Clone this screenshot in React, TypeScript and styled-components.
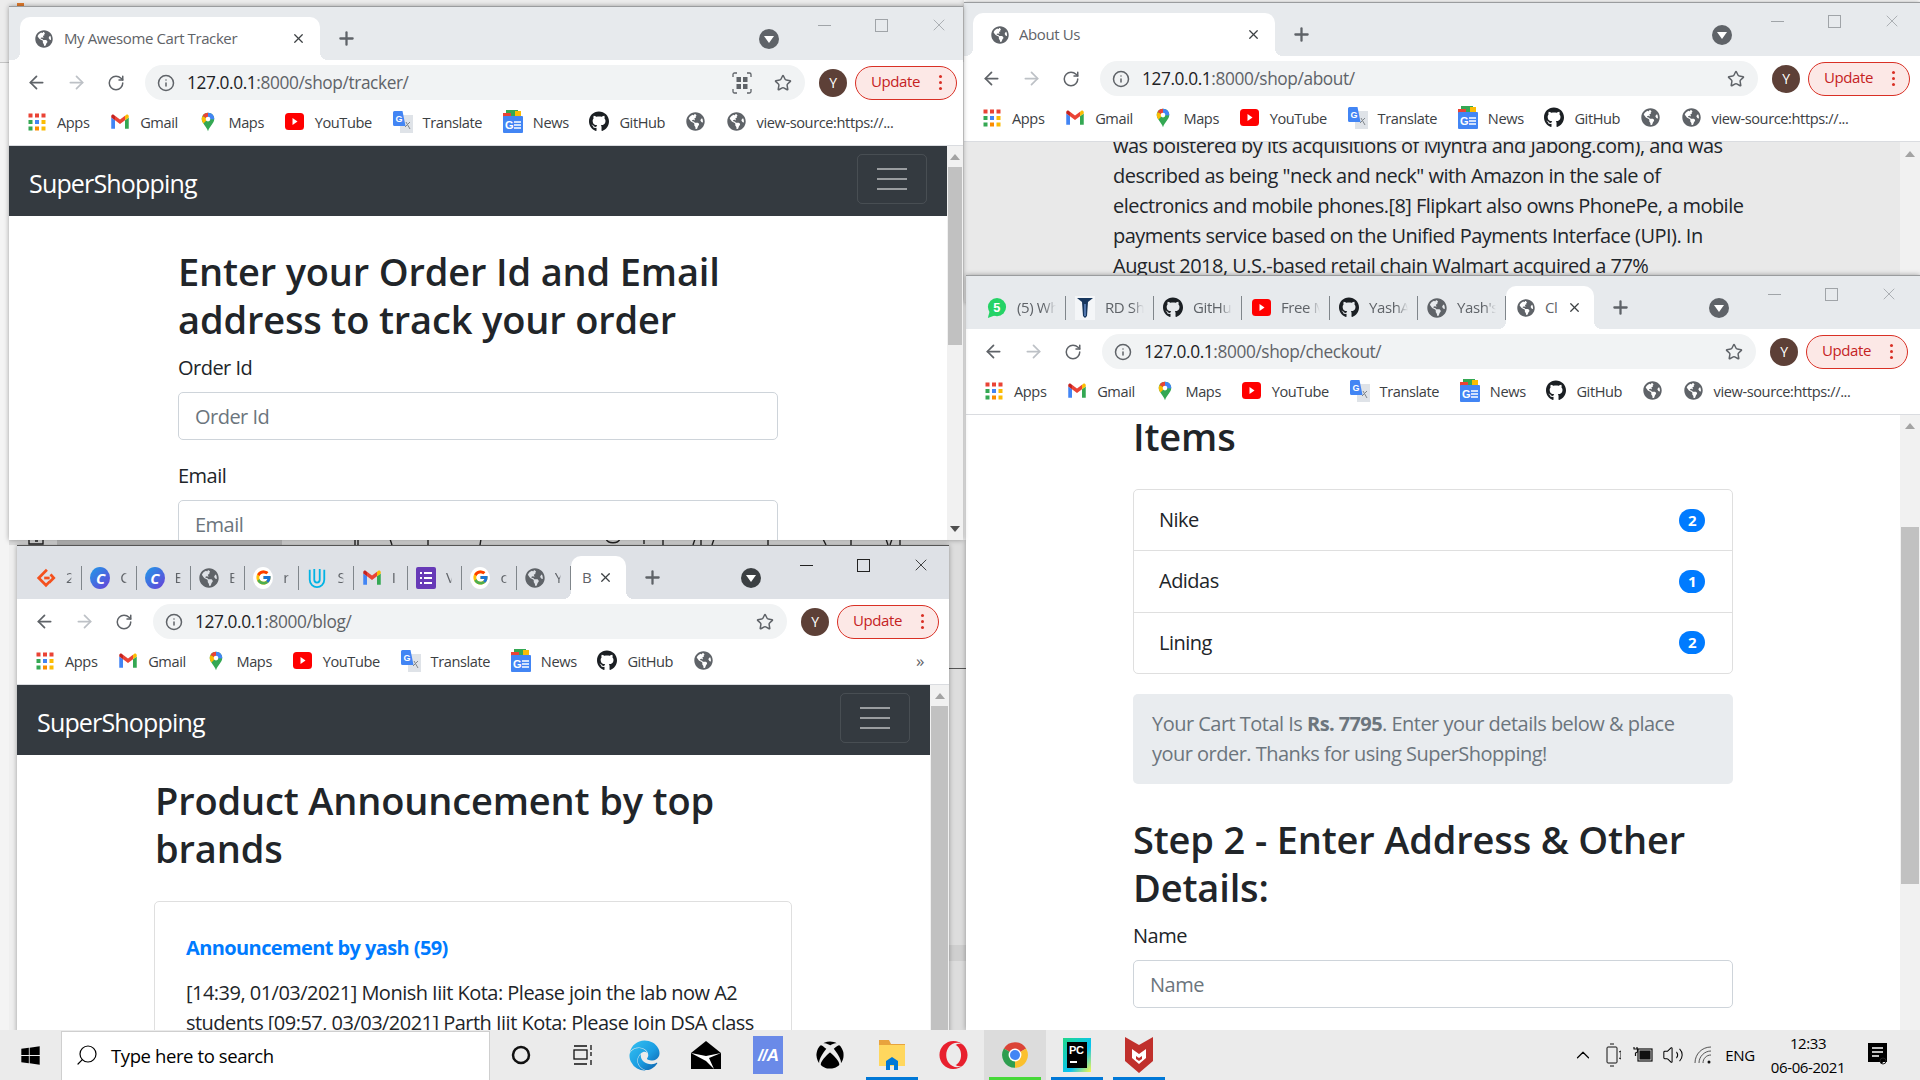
import React from 'react';
import styled, { createGlobalStyle } from 'styled-components';
import { ArrowLeft, ArrowRight, RotateCw, Info, Star, Plus, X, Search, ChevronUp, Volume2 } from 'lucide-react';
import { FaGlobeAmericas, FaGithub, FaWindows, FaXbox, FaOpera, FaEdge } from 'react-icons/fa';
import { FcGoogle } from 'react-icons/fc';

const UI = `"Open Sans", "Noto Sans", sans-serif`;

const GlobalStyle = createGlobalStyle`
  html, body { margin: 0; padding: 0; width: 1920px; height: 1080px; overflow: hidden; background: #fff; }
  body { font-family: ${UI}; letter-spacing: -0.025em; }
  * { box-sizing: border-box; }
`;

/* ---------- small drawn icons ---------- */

const AppsIcon = () => (
  <svg width="18" height="18" viewBox="0 0 18 18">
    {[
      ['#ea4335', '#ea4335', '#ea4335'],
      ['#34a853', '#4285f4', '#fbbc04'],
      ['#34a853', '#fb8c00', '#fbbc04'],
    ].map((row, r) =>
      row.map((c, i) => <rect key={`${r}${i}`} x={i * 6.5 + 0.5} y={r * 6.5 + 0.5} width="4" height="4" fill={c} />)
    )}
  </svg>
);

const GmailIcon = () => (
  <svg width="20" height="20" viewBox="0 0 24 24">
    <path fill="#4285f4" d="M1.5 20h4.5V10L1.5 6.5z" />
    <path fill="#34a853" d="M18 20h4.5V6.5L18 10z" />
    <path fill="#ea4335" d="M6 10V4.5l6 4.5 6-4.5V10l-6 4.5z" />
    <path fill="#fbbc04" d="M18 4.5V10l4.5-3.500V5c0-1.500-2-2.500-3.200-1.500z" />
    <path fill="#c5221f" d="M1.5 6.5L6 10V4.5L4.700 3.500C3.500 2.500 1.500 3.500 1.500 5z" />
  </svg>
);

const MapsIcon = () => (
  <svg width="20" height="24" viewBox="0 0 24 24">
    <path fill="#34a853" d="M12 1C7.600 1 4.500 4.400 4.500 8.500c0 5 5.500 8.500 7.500 14.500 2-6 7.500-9.500 7.500-14.500C19.500 4.400 16.400 1 12 1z" />
    <path fill="#fbbc04" d="M5.600 4.800C4.900 5.900 4.500 7.100 4.500 8.500c0 2 .9 3.700 2 5.300L12 8.500z" />
    <path fill="#4285f4" d="M12 1v7.500l6.500 0.500 1-0.500C19.500 4.400 16.400 1 12 1z" />
    <path fill="#ea4335" d="M12 1C9.300 1 7 2.400 5.600 4.800L12 8.500z" />
    <circle cx="12" cy="8.500" r="2.800" fill="#fff" />
  </svg>
);

const YoutubeIcon = () => (
  <svg width="19" height="17" viewBox="0 0 19 17">
    <rect width="19" height="17" rx="3.5" fill="#f00" />
    <path d="M7.500 5l5 3.500-5 3.500z" fill="#fff" />
  </svg>
);

const TranslateIcon = () => (
  <svg width="20" height="22" viewBox="0 0 20 22">
    <rect x="7" y="4" width="13" height="18" fill="#dfe3e8" />
    <path d="M13 11l4 7M17 11l-5 5" stroke="#80868b" strokeWidth="1" />
    <path d="M1.500 0h8l3 15H1.500A1.500 1.500 0 0 1 0 13.500v-12A1.500 1.500 0 0 1 1.500 0z" fill="#4285f4" />
    <text x="2.5" y="11" fontSize="9" fontWeight="700" fill="#fff" fontFamily="Liberation Sans">G</text>
  </svg>
);

const NewsIcon = () => (
  <svg width="20" height="23" viewBox="0 0 20 23">
    <rect x="3" y="0" width="12" height="6" fill="#34a853" />
    <rect x="12" y="1" width="6" height="6" fill="#fbbc04" />
    <rect x="0" y="3" width="8" height="4" fill="#ea4335" />
    <rect x="0" y="6" width="20" height="17" rx="1" fill="#4285f4" />
    <text x="2" y="19" fontSize="11" fontWeight="700" fill="#fff" fontFamily="Liberation Sans">G</text>
    <path d="M11 12h7M11 15h7M11 18h7" stroke="#fff" strokeWidth="1.5" />
  </svg>
);

const GoogleFav = () => (
  <GoogleBadge><FcGoogle size={17} /></GoogleBadge>
);

const LeetIcon = () => (
  <svg width="22" height="22" viewBox="0 0 22 22" fill="none" stroke="#f4511e" strokeWidth="3">
    <path d="M12 2L3 11l8 8 4-4" />
    <path d="M16 7l3.500 4-5 5" />
    <path d="M9 11h6" />
  </svg>
);

const CircleLetter = () => (
  <CircleC>C</CircleC>
);

const UdacityIcon = () => (
  <svg width="22" height="24" viewBox="0 0 22 24" fill="none" stroke="#02b3e4" strokeWidth="2">
    <path d="M3 3v11c0 5 4 8 8 8s8-3 8-8V3" />
    <path d="M8 2v12c0 2 1.500 3 3 3s3-1 3-3V2" />
  </svg>
);

const FormsIcon = () => (
  <svg width="20" height="22" viewBox="0 0 20 22">
    <rect width="20" height="22" rx="2" fill="#673ab7" />
    <path d="M8 6h8M8 11h8M8 16h8" stroke="#fff" strokeWidth="2" />
    <path d="M4 6h2M4 11h2M4 16h2" stroke="#fff" strokeWidth="2" />
  </svg>
);

const RdIcon = () => (
  <svg width="20" height="24" viewBox="0 0 20 24">
    <rect width="20" height="24" fill="#f4f6f8" />
    <path d="M2 2h16l-5 4-1 14-2 2-2-2-1-14z" fill="#17375e" />
    <path d="M10 8v12" stroke="#8ab4f8" strokeWidth="1" />
  </svg>
);

const WhatsappIcon = () => (
  <svg width="22" height="24" viewBox="0 0 22 24">
    <circle cx="11" cy="11" r="10" fill="#25d366" />
    <path d="M3 15l-2 8 8-3z" fill="#25d366" />
    <text x="7" y="16" fontSize="14" fontWeight="700" fill="#fff" fontFamily="Liberation Sans">5</text>
  </svg>
);

const ExtensionIcon = () => (
  <svg width="20" height="22" viewBox="0 0 20 22" fill="none" stroke="#5f6368" strokeWidth="1.3">
    <path d="M1 5V2.500C1 1.600 1.600 1 2.500 1H5M15 1h2.500c.9 0 1.500.6 1.500 1.500V5M19 17v2.500c0 .9-.6 1.500-1.500 1.500H15M5 21H2.500C1.600 21 1 20.400 1 19.500V17" />
    <rect x="4.5" y="5" width="4.5" height="5" fill="#5f6368" stroke="none" />
    <rect x="11" y="5" width="4.5" height="5" fill="#5f6368" stroke="none" />
    <rect x="4.5" y="12" width="4.5" height="5" fill="#5f6368" stroke="none" />
    <rect x="11" y="12" width="4.5" height="5" fill="#5f6368" stroke="none" />
  </svg>
);

/* ---------- browser chrome ---------- */

const Desktop = styled.main`
  width: 1920px;
  height: 1080px;
  display: flex;
  flex-direction: column;
`;

const Canvas = styled.section`
  position: relative;
  flex: 1;
  min-height: 0;
  overflow: hidden;
  background: #fff;
`;

const Behind = styled.div<{ $x: number; $y: number; $w: number; $h: number; $bg: string }>`
  position: absolute;
  left: ${p => p.$x}px;
  top: ${p => p.$y}px;
  width: ${p => p.$w}px;
  height: ${p => p.$h}px;
  background: ${p => p.$bg};
`;

const BehindTicks = styled.svg`
  position: absolute;
  left: 9px;
  top: 539px;
`;

const Window = styled.article<{ $x: number; $y: number; $w: number; $h: number; $edge?: string }>`
  position: absolute;
  left: ${p => p.$x}px;
  top: ${p => p.$y}px;
  width: ${p => p.$w}px;
  height: ${p => p.$h}px;
  display: flex;
  flex-direction: column;
  background: #fff;
  border-top: 1px solid ${p => p.$edge || '#9a9c9e'};
  box-shadow: 0 0 5px rgba(0, 0, 0, 0.35);
`;

const TabStrip = styled.header<{ $pad: number; $focused?: boolean }>`
  height: 53px;
  flex: none;
  display: flex;
  align-items: center;
  padding: 10px 0 0 ${p => p.$pad}px;
  background: ${p => (p.$focused ? '#dee1e6' : '#e7eaed')};
`;

const ActiveTab = styled.div<{ $w: number }>`
  position: relative;
  width: ${p => p.$w}px;
  height: 43px;
  flex: none;
  display: flex;
  align-items: center;
  background: #fff;
  border-radius: 10px 10px 0 0;
  color: #5f6368;
  font-size: 15px;
  &::before,
  &::after {
    content: '';
    position: absolute;
    bottom: 0;
    width: 8px;
    height: 8px;
  }
  &::before {
    left: -8px;
    background: radial-gradient(circle at 0 0, transparent 8px, #fff 8px);
  }
  &::after {
    right: -8px;
    background: radial-gradient(circle at 100% 0, transparent 8px, #fff 8px);
  }
`;

const TabFav = styled.span<{ $left: number }>`
  margin-left: ${p => p.$left}px;
  width: 20px;
  display: flex;
  justify-content: center;
  flex: none;
`;

const TabTitle = styled.span<{ $left: number }>`
  margin-left: ${p => p.$left}px;
  padding-bottom: 2px;
  flex: 1;
  white-space: nowrap;
  overflow: hidden;
`;

const TabClose = styled.span<{ $right: number }>`
  margin-right: ${p => p.$right}px;
  display: flex;
  flex: none;
  color: #3c4043;
`;

const BgTab = styled.div<{ $w: number }>`
  width: ${p => p.$w}px;
  height: 43px;
  flex: none;
  display: flex;
  align-items: center;
  position: relative;
  color: #5f6368;
  font-size: 15px;
  &::after {
    content: '';
    position: absolute;
    right: 0;
    top: 10px;
    height: 24px;
    width: 1px;
    background: #80868b;
  }
`;

const BgTabLabel = styled.span`
  margin-left: 10px;
  margin-right: 10px;
  padding-bottom: 2px;
  flex: 1;
  overflow: hidden;
  white-space: nowrap;
  mask-image: linear-gradient(90deg, #000 70%, transparent);
`;

const NewTab = styled.span`
  margin-left: 16px;
  display: flex;
  color: #5f6368;
`;

const Grow = styled.span`
  flex: 1;
`;

const TabSearch = styled.span<{ $focused?: boolean }>`
  width: 20px;
  height: 20px;
  margin-right: 17px;
  border-radius: 50%;
  background: ${p => (p.$focused ? '#3c4043' : '#5f6368')};
  display: flex;
  align-items: center;
  justify-content: center;
  flex: none;
  &::after {
    content: '';
    border-left: 5px solid transparent;
    border-right: 5px solid transparent;
    border-top: 7px solid #fff;
    margin-top: 2px;
  }
`;

const Controls = styled.div<{ $shift: number; $focused?: boolean }>`
  align-self: flex-start;
  margin-top: -10px;
  margin-right: ${p => p.$shift}px;
  height: ${p => (p.$focused ? 38 : 36)}px;
  display: flex;
  flex: none;
  color: ${p => (p.$focused ? '#222' : '#a0a4a8')};
`;

const Control = styled.span`
  width: 57px;
  display: flex;
  align-items: center;
  justify-content: center;
`;

const Minimize = styled.span`
  width: 13px;
  height: 1px;
  background: currentColor;
`;

const Maximize = styled.span`
  width: 13px;
  height: 13px;
  border: 1px solid currentColor;
`;

const Toolbar = styled.div<{ $inset: number }>`
  height: 45px;
  flex: none;
  display: flex;
  align-items: center;
  padding: 0 ${p => p.$inset}px 0 8px;
  background: #fff;
`;

const NavButton = styled.span<{ $off?: boolean }>`
  width: 39.5px;
  display: flex;
  justify-content: center;
  flex: none;
  color: ${p => (p.$off ? '#bdc1c6' : '#5f6368')};
`;

const Omnibox = styled.div`
  flex: 1;
  height: 35px;
  margin-left: 9.5px;
  padding: 0 13px 0 12px;
  display: flex;
  align-items: center;
  background: #f1f3f4;
  border-radius: 18px;
  color: #5f6368;
`;

const Url = styled.span`
  margin-left: 12px;
  flex: 1;
  font-size: 17.3px;
  white-space: nowrap;
`;

const Host = styled.span`
  color: #202124;
`;

const OmniAction = styled.span`
  margin-left: 22px;
  display: flex;
`;

const Avatar = styled.span`
  width: 28px;
  height: 28px;
  margin-left: 14px;
  flex: none;
  border-radius: 50%;
  background: #5d4037;
  color: #fff;
  font-size: 14px;
  display: flex;
  align-items: center;
  justify-content: center;
`;

const UpdatePill = styled.span`
  width: 102px;
  height: 34px;
  margin-left: 8px;
  padding: 0 14px 3px 15px;
  flex: none;
  display: flex;
  align-items: center;
  justify-content: space-between;
  background: #fce8e6;
  border: 1.5px solid #d93025;
  border-radius: 17px;
  color: #c5221f;
  font-size: 15px;
`;

const Dots = styled.span`
  width: 3.5px;
  height: 3.5px;
  margin-top: 3px;
  border-radius: 50%;
  background: #d93025;
  box-shadow: 0 -6px 0 #d93025, 0 6px 0 #d93025;
`;

const BookmarkBar = styled.nav`
  height: 41px;
  flex: none;
  display: flex;
  align-items: center;
  gap: 20.7px;
  padding: 0 18px 7px 18px;
  background: #fff;
  border-bottom: 1px solid #dadce0;
`;

const Bookmark = styled.span`
  display: flex;
  align-items: center;
  gap: 10px;
  color: #3c4043;
  font-size: 14.6px;
  white-space: nowrap;
`;

const BookmarkIcon = styled.span`
  width: 20px;
  height: 24px;
  display: flex;
  align-items: center;
  justify-content: center;
  flex: none;
`;

const More = styled.span`
  margin-left: auto;
  margin-right: 7px;
  color: #5f6368;
  font-size: 17px;
`;

const Page = styled.div`
  flex: 1;
  min-height: 0;
  display: flex;
`;

const Content = styled.div<{ $grey?: boolean }>`
  flex: 1;
  min-width: 0;
  overflow: hidden;
  background: ${p => (p.$grey ? '#e9e9e9' : '#fff')};
  color: #212529;
  font-size: 20px;
  line-height: 30px;
  letter-spacing: -0.026em;
`;

const Scrollbar = styled.aside<{ $w: number }>`
  width: ${p => p.$w}px;
  flex: none;
  display: flex;
  flex-direction: column;
  align-items: center;
  background: #f1f1f1;
`;

const ArrowBox = styled.span<{ $h: number }>`
  height: ${p => p.$h}px;
  flex: none;
  display: flex;
  align-items: center;
  &::after {
    content: '';
    border-left: 5px solid transparent;
    border-right: 5px solid transparent;
    border-bottom: 6px solid #a3a3a3;
  }
`;

const ArrowDown = styled.span`
  margin-top: auto;
  height: 22px;
  display: flex;
  align-items: center;
  &::after {
    content: '';
    border-left: 5px solid transparent;
    border-right: 5px solid transparent;
    border-top: 6px solid #505050;
  }
`;

const Thumb = styled.span<{ $top: number; $h: number }>`
  width: calc(100% - 2px);
  margin-top: ${p => p.$top}px;
  height: ${p => p.$h}px;
  flex: none;
  background: #c1c1c1;
`;

const Navbar = styled.div`
  height: 70px;
  padding: 0 20px;
  display: flex;
  align-items: center;
  justify-content: space-between;
  background: #343a40;
`;

const Brand = styled.span`
  padding-top: 3px;
  color: #fff;
  font-size: 25px;
  letter-spacing: -0.033em;
`;

const Toggler = styled.span`
  width: 70px;
  height: 50px;
  margin-top: -4px;
  border: 1px solid rgba(255, 255, 255, 0.1);
  border-radius: 5px;
  display: flex;
  flex-direction: column;
  align-items: center;
  justify-content: center;
  gap: 8px;
`;

const TogglerBar = styled.span`
  width: 30px;
  height: 2px;
  background: rgba(255, 255, 255, 0.5);
`;

const Column = styled.div<{ $left: number; $top: number; $w: number }>`
  margin-left: ${p => p.$left}px;
  margin-top: ${p => p.$top}px;
  width: ${p => p.$w}px;
`;

const Prose = styled.p`
  margin: 0;
  white-space: nowrap;
`;

const Heading = styled.h1`
  margin: 0 0 9px;
  font-size: 38px;
  line-height: 48px;
  font-weight: 600;
  letter-spacing: -0.004em;
  white-space: nowrap;
`;

const Label = styled.div`
  padding-top: 1px;
  margin-bottom: 9px;
  white-space: nowrap;
`;

const Field = styled.div`
  height: 48px;
  margin-bottom: 20px;
  padding: 1px 0 0 16px;
  display: flex;
  align-items: center;
  border: 1px solid #ced4da;
  border-radius: 5px;
  color: #6c757d;
`;

const CartList = styled.ul`
  list-style: none;
  margin: 29px 0 20px;
  padding: 0;
  height: 185px;
  display: flex;
  flex-direction: column;
  border: 1px solid #dfdfdf;
  border-radius: 5px;
`;

const CartRow = styled.li`
  flex: 1;
  padding: 0 27px 0 25px;
  display: flex;
  align-items: center;
  justify-content: space-between;
  border-bottom: 1px solid #dfdfdf;
  &:last-child {
    border-bottom: 0;
  }
`;

const Badge = styled.span`
  width: 26px;
  height: 23px;
  border-radius: 12px;
  background: #007bff;
  color: #fff;
  font-size: 15px;
  font-weight: 700;
  line-height: 23px;
  text-align: center;
`;

const Summary = styled.div`
  height: 90px;
  margin-bottom: 31px;
  padding: 15px 19px;
  background: #e9ecef;
  border-radius: 5px;
  color: #6c757d;
  white-space: nowrap;
`;

const Strong = styled.b`
  letter-spacing: -0.03em;
`;

const Card = styled.div`
  margin-top: 29px;
  margin-left: -1px;
  width: 638px;
  height: 200px;
  padding: 31px 31px;
  border: 1px solid #dfdfdf;
  border-radius: 5px;
  white-space: nowrap;
`;

const CardTitle = styled.div`
  margin-bottom: 15px;
  color: #007bff;
  font-weight: 700;
  letter-spacing: -0.03em;
`;

/* ---------- taskbar ---------- */

const Taskbar = styled.footer`
  height: 50px;
  flex: none;
  display: flex;
  align-items: stretch;
  background: #ebebeb;
  color: #000;
`;

const StartButton = styled.span`
  width: 61px;
  display: flex;
  align-items: center;
  justify-content: center;
  color: #000;
`;

const SearchBox = styled.span`
  width: 429px;
  margin-top: 1px;
  padding: 0 0 2px 13px;
  display: flex;
  align-items: center;
  gap: 12px;
  background: #fff;
  border: 1px solid #cfcfcf;
  border-width: 1px 1px 0 1px;
  font-size: 18.5px;
`;

const SearchGlass = styled(Search)`
  transform: scaleX(-1);
`;

const Slot = styled.span<{ $mark?: string; $on?: boolean }>`
  position: relative;
  width: 61.8px;
  display: flex;
  align-items: center;
  justify-content: center;
  background: ${p => (p.$on ? '#dcdcdc' : 'transparent')};
  &::after {
    content: '';
    display: ${p => (p.$mark ? 'block' : 'none')};
    position: absolute;
    left: 5px;
    right: 5px;
    bottom: 0;
    height: 3px;
    background: ${p => p.$mark};
  }
`;

const Tray = styled.div`
  margin-left: auto;
  padding-right: 22px;
  display: flex;
  align-items: center;
`;

const TrayItem = styled.span`
  width: 30px;
  display: flex;
  justify-content: center;
`;

const Lang = styled.span`
  width: 44px;
  text-align: center;
  font-size: 15px;
`;

const Clock = styled.span`
  width: 90px;
  margin: 0 5px 0 1px;
  text-align: center;
  font-size: 15px;
  line-height: 24px;
`;

const Notify = styled.span`
  width: 40px;
  display: flex;
  justify-content: center;
`;

const GoogleBadge = styled.span`
  width: 22px;
  height: 22px;
  border-radius: 50%;
  background: #fff;
  display: flex;
  align-items: center;
  justify-content: center;
`;

const CircleC = styled.span`
  width: 22px;
  height: 22px;
  border-radius: 50%;
  background: linear-gradient(135deg, #1e9be8, #6a3fd8);
  color: #fff;
  font-size: 15px;
  font-style: italic;
  font-weight: 700;
  display: flex;
  align-items: center;
  justify-content: center;
`;

/* ---------- data ---------- */

const Globe = ({ size = 18 }: { size?: number }) => <FaGlobeAmericas size={size} color="#5f6368" />;

const BOOKMARKS: [string, React.ReactNode][] = [
  ['Apps', <AppsIcon />],
  ['Gmail', <GmailIcon />],
  ['Maps', <MapsIcon />],
  ['YouTube', <YoutubeIcon />],
  ['Translate', <TranslateIcon />],
  ['News', <NewsIcon />],
  ['GitHub', <FaGithub size={21} color="#1b1f23" />],
  ['', <Globe size={19} />],
];

const CHECKOUT_TABS: [React.ReactNode, string][] = [
  [<WhatsappIcon />, '(5) WhatsApp'],
  [<RdIcon />, 'RD Sharma'],
  [<FaGithub size={21} color="#1b1f23" />, 'GitHub'],
  [<YoutubeIcon />, 'Free Movies'],
  [<FaGithub size={21} color="#1b1f23" />, 'YashAg'],
  [<Globe size={20} />, "Yash's"],
];

const BLOG_TABS: [React.ReactNode, string][] = [
  [<LeetIcon />, '2'],
  [<CircleLetter />, 'C'],
  [<CircleLetter />, 'E'],
  [<Globe size={20} />, 'E'],
  [<GoogleFav />, 'r'],
  [<UdacityIcon />, 'S'],
  [<GmailIcon />, 'I'],
  [<FormsIcon />, 'V'],
  [<GoogleFav />, 'c'],
  [<Globe size={20} />, 'Y'],
];

/* ---------- window parts ---------- */

interface ChromeProps {
  tabs: React.ReactNode;
  host: string;
  path: string;
  inset: number;
  pad?: number;
  shift?: number;
  focused?: boolean;
  extension?: boolean;
  source?: boolean;
}

const Chrome = ({ tabs, host, path, inset, pad = 11, shift = 0, focused, extension, source = true }: ChromeProps) => (
  <>
    <TabStrip $pad={pad} $focused={focused}>
      {tabs}
      <NewTab><Plus size={21} strokeWidth={2.6} /></NewTab>
      <Grow />
      <TabSearch $focused={focused} />
      <Controls $shift={shift} $focused={focused}>
        <Control><Minimize /></Control>
        <Control><Maximize /></Control>
        <Control><X size={20} strokeWidth={1} /></Control>
      </Controls>
    </TabStrip>
    <Toolbar $inset={inset}>
      <NavButton><ArrowLeft size={21} strokeWidth={2} /></NavButton>
      <NavButton $off><ArrowRight size={21} strokeWidth={2} /></NavButton>
      <NavButton><RotateCw size={18} strokeWidth={2} /></NavButton>
      <Omnibox>
        <Info size={18} strokeWidth={2} />
        <Url><Host>{host}</Host>{path}</Url>
        {extension && <ExtensionIcon />}
        <OmniAction><Star size={18} strokeWidth={2} /></OmniAction>
      </Omnibox>
      <Avatar>Y</Avatar>
      <UpdatePill>Update<Dots /></UpdatePill>
    </Toolbar>
    <BookmarkBar>
      {BOOKMARKS.map(([label, icon], i) => (
        <Bookmark key={i}>
          <BookmarkIcon>{icon}</BookmarkIcon>
          {label}
        </Bookmark>
      ))}
      {source ? (
        <Bookmark>
          <BookmarkIcon><Globe size={19} /></BookmarkIcon>
          view-source:https://...
        </Bookmark>
      ) : (
        <More>»</More>
      )}
    </BookmarkBar>
  </>
);

const Nav = () => (
  <Navbar>
    <Brand>SuperShopping</Brand>
    <Toggler>
      <TogglerBar />
      <TogglerBar />
      <TogglerBar />
    </Toggler>
  </Navbar>
);

const Underneath = () => (
  <>
    <Behind $x={0} $y={0} $w={964} $h={62} $bg="#ececec" />
    <Behind $x={17} $y={3} $w={7} $h={3} $bg="#e07a2c" />
    <Behind $x={0} $y={62} $w={9} $h={1} $bg="#c4c4c4" />
    <Behind $x={0} $y={125} $w={9} $h={1} $bg="#dcdcdc" />
    <Behind $x={0} $y={63} $w={9} $h={967} $bg="#f4f4f4" />
    <Behind $x={9} $y={540} $w={8} $h={490} $bg="#efefef" />
    <Behind $x={949} $y={540} $w={17} $h={490} $bg="#dddddd" />
    <Behind $x={949} $y={668} $w={17} $h={1} $bg="#555" />
    <Behind $x={949} $y={945} $w={17} $h={16} $bg="#cfcfcf" />
    <BehindTicks width="940" height="6" viewBox="0 0 940 6">
      <rect width="940" height="6" fill="#dbdbdb" />
      <rect x="48" width="225" height="6" fill="#bdbdbd" />
      <path
        d="M20 0v5h14v-5M26 2h3M346 0v6M349 0v6M381 0l2 6M419 0v6M472 0l-1 6M635 0l0 5M654 0v6M686 0l-2 6M692 0v6M705 0l-2 6M759 0v6M814 0l3 6M842 0v6M877 0l2 6M883 0l-2 6M891 0v6M597 0c2 5 12 5 14 0"
        fill="none"
        stroke="#222"
        strokeWidth="1.4"
      />
    </BehindTicks>
  </>
);

const TaskIcons = () => (
  <>
    <Slot>
      <svg width="22" height="22" viewBox="0 0 22 22"><circle cx="11" cy="11" r="8" fill="none" stroke="#111" strokeWidth="2.5" /></svg>
    </Slot>
    <Slot>
      <svg width="22" height="24" viewBox="0 0 22 24" fill="none" stroke="#111" strokeWidth="1.3">
        <rect x="2" y="7" width="13" height="9" />
        <path d="M2 3h13M2 21h13M19 2v5M19 9v4M19 17v5" />
      </svg>
    </Slot>
    <Slot>
      <svg width="0" height="0">
        <defs>
          <linearGradient id="edgeFill" x1="0" y1="0" x2="1" y2="1">
            <stop offset="0" stopColor="#35c1f1" />
            <stop offset="0.55" stopColor="#1b9de2" />
            <stop offset="1" stopColor="#0c59a4" />
          </linearGradient>
        </defs>
      </svg>
      <FaEdge size={31} fill="url(#edgeFill)" />
    </Slot>
    <Slot>
      <svg width="30" height="28" viewBox="0 0 30 28">
        <path d="M0 12L15 0l15 12v16H0z" fill="#000" />
        <path d="M0 12l15 8 8 8-5-11 12-5-15 3z" fill="#fff" />
      </svg>
    </Slot>
    <Slot>
      <svg width="30" height="38" viewBox="0 0 30 38">
        <rect width="30" height="38" fill="#6a8ae8" />
        <text x="5" y="25" fontSize="17" fontStyle="italic" fontWeight="700" fill="#fff" fontFamily="Liberation Sans">//A</text>
      </svg>
    </Slot>
    <Slot><FaXbox size={28} color="#000" /></Slot>
    <Slot $mark="#0078d7">
      <svg width="28" height="30" viewBox="0 0 28 30">
        <path d="M1 0h10l2 4h14v22H1z" fill="#e8a33d" />
        <rect x="1" y="5" width="26" height="21" fill="#ffd75e" />
        <path d="M8 30V21l6-4 6 4v9h-4v-5h-4v5z" fill="#0078d7" />
      </svg>
    </Slot>
    <Slot><FaOpera size={29} color="#e8202e" /></Slot>
    <Slot $on $mark="#46d838">
      <svg width="28" height="28" viewBox="0 0 24 24">
        <path d="M12 12L2.470 6.500A11 11 0 0 1 21.530 6.500z" fill="#db4437" />
        <path d="M12 12L21.530 6.500A11 11 0 0 1 12 23z" fill="#fbc02d" />
        <path d="M12 12L12 23A11 11 0 0 1 2.470 6.500z" fill="#2e9e4f" />
        <circle cx="12" cy="12" r="5.5" fill="#fff" />
        <circle cx="12" cy="12" r="4.3" fill="#4285f4" />
      </svg>
    </Slot>
    <Slot $mark="#0078d7">
      <svg width="28" height="34" viewBox="0 0 28 34">
        <defs>
          <linearGradient id="pcFill" x1="0" y1="0" x2="1" y2="1">
            <stop offset="0" stopColor="#21d789" />
            <stop offset="0.6" stopColor="#07c3f2" />
            <stop offset="1" stopColor="#fcf84a" />
          </linearGradient>
        </defs>
        <rect width="28" height="34" fill="url(#pcFill)" />
        <rect x="4" y="4" width="20" height="26" fill="#000" />
        <text x="6" y="16" fontSize="11" fontWeight="700" fill="#fff" fontFamily="Liberation Sans">PC</text>
        <rect x="7" y="23" width="7" height="2" fill="#fff" />
      </svg>
    </Slot>
    <Slot $mark="#0078d7">
      <svg width="28" height="36" viewBox="0 0 28 36">
        <path d="M0 0l14 8 14-8v24L14 36 0 24z" fill="#c0302c" />
        <path d="M7 12l7 5 7-5v9l-7 6-7-6z" fill="#fff" />
        <path d="M11 19l3 2 3-2v3l-3 2-3-2z" fill="#c0302c" />
      </svg>
    </Slot>
  </>
);

const TrayIcons = () => (
  <Tray>
    <TrayItem><ChevronUp size={22} strokeWidth={1.3} /></TrayItem>
    <TrayItem>
      <svg width="16" height="24" viewBox="0 0 16 24" fill="none" stroke="#111" strokeWidth="1">
        <rect x="2" y="4" width="10" height="16" rx="1" />
        <path d="M5 1h4M5 23h4M14 9l2-1v8l-2-1" />
      </svg>
    </TrayItem>
    <TrayItem>
      <svg width="20" height="20" viewBox="0 0 20 20" fill="none" stroke="#111" strokeWidth="1.2">
        <rect x="5" y="4" width="14" height="12" />
        <rect x="7" y="6" width="10" height="8" fill="#111" />
        <path d="M1 2v2M4 2v2M0.500 4h4v3l-2 1v3" />
      </svg>
    </TrayItem>
    <TrayItem><Volume2 size={22} strokeWidth={1.1} /></TrayItem>
    <TrayItem>
      <svg width="20" height="20" viewBox="0 0 20 20" fill="none" stroke="#222" strokeWidth="1">
        <path d="M2 18C2 9 9 2 18 2M6 18c0-6.500 5.500-12 12-12M10 18c0-4.500 3.500-8 8-8" opacity="0.75" />
        <circle cx="16" cy="17" r="1.5" fill="#111" stroke="none" />
      </svg>
    </TrayItem>
    <Lang>ENG</Lang>
    <Clock>12:33<br />06-06-2021</Clock>
    <Notify>
      <svg width="22" height="24" viewBox="0 0 22 24">
        <path d="M1 0h19v19h-4l-1 2-2-2H1z" fill="#000" />
        <path d="M5 5h11M5 9h11M5 13h7" stroke="#fff" strokeWidth="1.3" />
        <circle cx="16" cy="18" r="3" fill="none" stroke="#222" />
      </svg>
    </Notify>
  </Tray>
);

export default function App() {
  return (
    <Desktop>
      <GlobalStyle />
      <Canvas>
        <Underneath />

        <Window $x={964} $y={2} $w={956} $h={300}>
          <Chrome
            pad={9}
            inset={10}
            host="127.0.0.1"
            path=":8000/shop/about/"
            tabs={
              <ActiveTab $w={302}>
                <TabFav $left={17}><Globe /></TabFav>
                <TabTitle $left={9}>About Us</TabTitle>
                <TabClose $right={14}><X size={15} strokeWidth={2} /></TabClose>
              </ActiveTab>
            }
          />
          <Page>
            <Content $grey>
              <Column $left={149} $top={-11} $w={640}>
                <Prose>
                  was bolstered by its acquisitions of Myntra and Jabong.com), and was<br />
                  described as being "neck and neck" with Amazon in the sale of<br />
                  electronics and mobile phones.[8] Flipkart also owns PhonePe, a mobile<br />
                  payments service based on the Unified Payments Interface (UPI). In<br />
                  August 2018, U.S.-based retail chain Walmart acquired a 77%
                </Prose>
              </Column>
            </Content>
            <Scrollbar $w={20}><ArrowBox $h={24} /></Scrollbar>
          </Page>
        </Window>

        <Window $x={966} $y={275} $w={954} $h={755}>
          <Chrome
            inset={12}
            pad={12}
            shift={3}
            host="127.0.0.1"
            path=":8000/shop/checkout/"
            tabs={
              <>
                {CHECKOUT_TABS.map(([icon, label], i) => (
                  <BgTab key={i} $w={88}>
                    <TabFav $left={9}>{icon}</TabFav>
                    <BgTabLabel>{label}</BgTabLabel>
                  </BgTab>
                ))}
                <ActiveTab $w={88}>
                  <TabFav $left={10}><Globe /></TabFav>
                  <TabTitle $left={9}>Cl</TabTitle>
                  <TabClose $right={12}><X size={15} strokeWidth={2} /></TabClose>
                </ActiveTab>
              </>
            }
          />
          <Page>
            <Content>
              <Column $left={167} $top={-3} $w={600}>
                <Heading>Items</Heading>
                <CartList>
                  <CartRow>Nike<Badge>2</Badge></CartRow>
                  <CartRow>Adidas<Badge>1</Badge></CartRow>
                  <CartRow>Lining<Badge>2</Badge></CartRow>
                </CartList>
                <Summary>
                  Your Cart Total Is <Strong>Rs. 7795</Strong>. Enter your details below &amp; place<br />
                  your order. Thanks for using SuperShopping!
                </Summary>
                <Heading>Step 2 - Enter Address &amp; Other<br />Details:</Heading>
                <Label>Name</Label>
                <Field>Name</Field>
              </Column>
            </Content>
            <Scrollbar $w={20}>
              <ArrowBox $h={22} />
              <Thumb $top={90} $h={357} />
            </Scrollbar>
          </Page>
        </Window>

        <Window $x={9} $y={6} $w={954} $h={534}>
          <Chrome
            inset={6}
            shift={-4}
            extension
            host="127.0.0.1"
            path=":8000/shop/tracker/"
            tabs={
              <ActiveTab $w={300}>
                <TabFav $left={14}><Globe /></TabFav>
                <TabTitle $left={10}>My Awesome Cart Tracker</TabTitle>
                <TabClose $right={14}><X size={15} strokeWidth={2} /></TabClose>
              </ActiveTab>
            }
          />
          <Page>
            <Content>
              <Nav />
              <Column $left={169} $top={31} $w={600}>
                <Heading>Enter your Order Id and Email<br />address to track your order</Heading>
                <Label>Order Id</Label>
                <Field>Order Id</Field>
                <Label>Email</Label>
                <Field>Email</Field>
              </Column>
            </Content>
            <Scrollbar $w={16}>
              <ArrowBox $h={21} />
              <Thumb $top={0} $h={178} />
              <ArrowDown />
            </Scrollbar>
          </Page>
        </Window>

        <Window $x={17} $y={545} $w={932} $h={490} $edge="#555">
          <Chrome
            inset={10}
            focused
            source={false}
            host="127.0.0.1"
            path=":8000/blog/"
            tabs={
              <>
                {BLOG_TABS.map(([icon, label], i) => (
                  <BgTab key={i} $w={54.3}>
                    <TabFav $left={8}>{icon}</TabFav>
                    <BgTabLabel>{label}</BgTabLabel>
                  </BgTab>
                ))}
                <ActiveTab $w={55}>
                  <TabTitle $left={11}>B</TabTitle>
                  <TabClose $right={13}><X size={15} strokeWidth={2} /></TabClose>
                </ActiveTab>
              </>
            }
          />
          <Page>
            <Content>
              <Nav />
              <Column $left={138} $top={21} $w={640}>
                <Heading>Product Announcement by top<br />brands</Heading>
                <Card>
                  <CardTitle>Announcement by yash (59)</CardTitle>
                  [14:39, 01/03/2021] Monish Iiit Kota: Please join the lab now A2<br />
                  students [09:57, 03/03/2021] Parth Iiit Kota: Please Join DSA class
                </Card>
              </Column>
            </Content>
            <Scrollbar $w={19}>
              <ArrowBox $h={21} />
              <Thumb $top={0} $h={340} />
            </Scrollbar>
          </Page>
        </Window>
      </Canvas>

      <Taskbar>
        <StartButton><FaWindows size={21} /></StartButton>
        <SearchBox>
          <SearchGlass size={24} strokeWidth={1.2} />
          Type here to search
        </SearchBox>
        <TaskIcons />
        <TrayIcons />
      </Taskbar>
    </Desktop>
  );
}
